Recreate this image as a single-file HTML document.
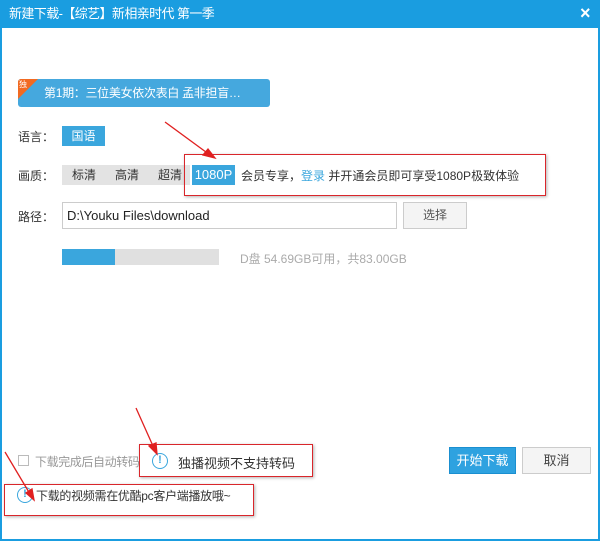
<!DOCTYPE html>
<html><head><meta charset="utf-8"><style>
*{margin:0;padding:0;box-sizing:border-box}
body{width:600px;height:541px;overflow:hidden;background:#fff;font-family:"Liberation Sans","Noto Sans CJK SC",sans-serif;position:relative;color:#333;font-size:12px}
.a{position:absolute}
.f{border-left:2px solid #1a9de0;border-right:2px solid #1a9de0;border-bottom:2px solid #1a9de0;left:0;top:0;width:600px;height:541px}
.t{left:0;top:0;width:600px;height:28px;background:#1a9de0;color:#fff;font-size:13px;line-height:28px;padding-left:9px;letter-spacing:-0.6px}
.red{border:1.5px solid #d9262b;box-shadow:1px 1px 3px rgba(0,0,0,.3)}
.ic{width:16px;height:16px;border:1.5px solid #3aa6dd;border-radius:50%;color:#3aa6dd;font-size:11px;line-height:13px;text-align:center;font-weight:bold}
</style></head><body>
<div class="a f"></div>
<div class="a t">新建下载-【综艺】新相亲时代 第一季</div>
<div class="a" style="left:580px;top:3px;color:#fff;font-size:18px;font-weight:bold">×</div>

<div class="a" style="left:18px;top:79px;width:252px;height:28px;background:#45a8de;border-radius:3px;overflow:hidden;color:#fff;font-size:12px;line-height:28px;padding-left:26px;letter-spacing:-0.3px">第1期：三位美女依次表白 孟非担盲…
<svg class="a" style="left:0;top:0" width="20" height="20"><polygon points="0,0 20,0 0,20" fill="#f26a21"/></svg>
<span class="a" style="left:1px;top:-8px;font-size:8px;color:#fff">独</span></div>

<div class="a" style="left:18px;top:128px;font-size:12px">语言：</div>
<div class="a" style="left:62px;top:126px;width:43px;height:20px;background:#3aa6dd;color:#fff;text-align:center;line-height:20px">国语</div>

<div class="a" style="left:18px;top:167px">画质：</div>
<div class="a" style="left:62px;top:165px;width:128px;height:20px;background:#e3e3e3;line-height:20px"><span class="a" style="left:10px">标清</span><span class="a" style="left:53px">高清</span><span class="a" style="left:96px">超清</span></div>
<div class="a" style="left:192px;top:165px;width:43px;height:20px;background:#3aa6dd;color:#fff;text-align:center;line-height:20px;font-size:13px">1080P</div>
<div class="a" style="left:241px;top:167px">会员专享，<span style="color:#3aa6dd">登录</span> 并开通会员即可享受1080P极致体验</div>
<div class="a red" style="left:184px;top:154px;width:362px;height:42px"></div>

<div class="a" style="left:18px;top:208px">路径：</div>
<div class="a" style="left:62px;top:202px;width:335px;height:27px;border:1px solid #ccc;line-height:25px;padding-left:4px;font-size:13px;color:#222">D:\Youku Files\download</div>
<div class="a" style="left:403px;top:202px;width:64px;height:27px;border:1px solid #ccc;background:#f4f4f4;text-align:center;line-height:25px;color:#555">选择</div>

<div class="a" style="left:62px;top:249px;width:157px;height:16px;background:#e0e0e0"><div style="width:53px;height:16px;background:#3aa6dd"></div></div>
<div class="a" style="left:240px;top:250px;color:#aaa">D盘 54.69GB可用，共83.00GB</div>

<div class="a" style="left:18px;top:455px;width:11px;height:11px;border:1px solid #bbb"></div>
<div class="a" style="left:35px;top:453px;color:#999;letter-spacing:-0.4px">下载完成后自动转码</div>
<div class="a ic" style="left:152px;top:453px">!</div>
<div class="a" style="left:178px;top:453px;font-size:13px;color:#333">独播视频不支持转码</div>
<div class="a red" style="left:139px;top:444px;width:174px;height:33px"></div>

<div class="a" style="left:449px;top:447px;width:67px;height:27px;background:#2ea2e0;border:1px solid #1a8fd0;color:#fff;text-align:center;line-height:25px;font-size:13px">开始下载</div>
<div class="a" style="left:522px;top:447px;width:69px;height:27px;background:#f4f4f4;border:1px solid #ccc;text-align:center;line-height:25px;color:#444;font-size:13px">取消</div>

<div class="a ic" style="left:17px;top:487px">!</div>
<div class="a" style="left:36px;top:487px;font-size:12px;color:#333;letter-spacing:-0.3px">下载的视频需在优酷pc客户端播放哦~</div>
<div class="a red" style="left:4px;top:484px;width:250px;height:32px"></div>

<svg class="a" style="left:0;top:0" width="600" height="541">
<g stroke="#e02020" stroke-width="1.3" fill="#e02020">
<line x1="165" y1="122" x2="210" y2="155"/><polygon points="215,158 203,155 208,149"/>
<line x1="136" y1="408" x2="153" y2="446"/><polygon points="157,454 149,446 156,443"/>
<line x1="5" y1="452" x2="30" y2="494"/><polygon points="34,500 26,493 32,489"/>
</g></svg>
</body></html>
